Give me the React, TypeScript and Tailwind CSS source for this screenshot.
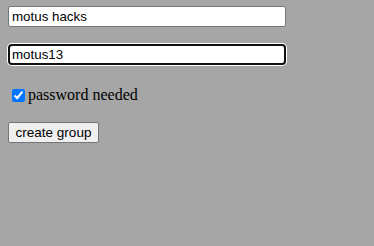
import React from "react";

export default function App() {
  return (
    <div className="min-h-screen w-full bg-[#a6a6a6] pl-2 pt-[6px] flex flex-col items-start">
      <input
        type="text"
        defaultValue="motus hacks"
        className="h-[21px] w-[278px] bg-white border border-[#767676] rounded-[2px] px-[3px] text-[13.33px] text-black font-['Liberation_Sans',Arial,sans-serif] outline-none"
      />
      <input
        type="text"
        defaultValue="motus13"
        className="mt-[17px] h-[21px] w-[278px] bg-white border-2 border-[#101010] rounded-[4px] px-[2px] shadow-[0_0_0_1px_#ffffff] text-[13.33px] text-black font-['Liberation_Sans',Arial,sans-serif] outline-none"
      />
      <label className="mt-[21px] h-[18px] flex items-center font-['Liberation_Serif','Times_New_Roman',serif] text-[16px] text-black leading-[18px]">
        <input
          type="checkbox"
          defaultChecked
          className="ml-[4px] mr-[3px] w-[13px] h-[13px] accent-[#0075ff]"
        />
        password needed
      </label>
      <button
        type="button"
        className="mt-[18px] h-[21px] w-[91px] bg-[#efefef] border border-[#767676] rounded-[2px] text-[13.5px] text-black font-['Liberation_Sans',Arial,sans-serif] leading-none flex items-center justify-center"
      >
        create group
      </button>
    </div>
  );
}
